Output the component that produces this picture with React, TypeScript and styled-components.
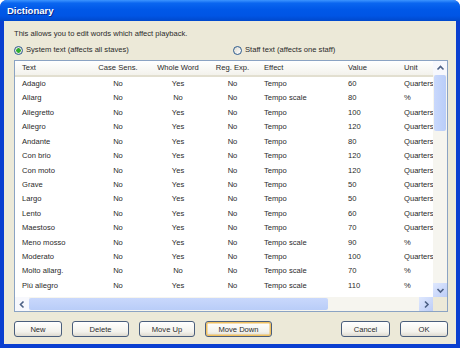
import React from "react";
import styled, { createGlobalStyle } from "styled-components";

const GlobalStyle = createGlobalStyle`
  html, body {
    margin: 0;
    padding: 0;
    background: #ffffff;
  }
  body {
    font-family: "Liberation Sans", Arial, sans-serif;
    color: #2a2a2a;
  }
`;

type Align = "left" | "center";

const columns: { label: string; width: number; align: Align; pad: number }[] = [
  { label: "Text", width: 80, align: "left", pad: 7 },
  { label: "Case Sens.", width: 46, align: "center", pad: 0 },
  { label: "Whole Word", width: 74, align: "center", pad: 0 },
  { label: "Reg. Exp.", width: 35, align: "center", pad: 0 },
  { label: "Effect", width: 91, align: "left", pad: 14 },
  { label: "Value", width: 57, align: "left", pad: 7 },
  { label: "Unit", width: 60, align: "left", pad: 6 },
];

const rows: string[][] = [
  ["Adagio", "No", "Yes", "No", "Tempo", "60", "Quarters"],
  ["Allarg", "No", "No", "No", "Tempo scale", "80", "%"],
  ["Allegretto", "No", "Yes", "No", "Tempo", "100", "Quarters"],
  ["Allegro", "No", "Yes", "No", "Tempo", "120", "Quarters"],
  ["Andante", "No", "Yes", "No", "Tempo", "80", "Quarters"],
  ["Con brio", "No", "Yes", "No", "Tempo", "120", "Quarters"],
  ["Con moto", "No", "Yes", "No", "Tempo", "120", "Quarters"],
  ["Grave", "No", "Yes", "No", "Tempo", "50", "Quarters"],
  ["Largo", "No", "Yes", "No", "Tempo", "50", "Quarters"],
  ["Lento", "No", "Yes", "No", "Tempo", "60", "Quarters"],
  ["Maestoso", "No", "Yes", "No", "Tempo", "70", "Quarters"],
  ["Meno mosso", "No", "Yes", "No", "Tempo scale", "90", "%"],
  ["Moderato", "No", "Yes", "No", "Tempo", "100", "Quarters"],
  ["Molto allarg.", "No", "No", "No", "Tempo scale", "70", "%"],
  ["Più allegro", "No", "Yes", "No", "Tempo scale", "110", "%"],
];

const gridTemplate = columns.map((c) => `${c.width}px`).join(" ");

const Arrow = ({ dir }: { dir: "up" | "down" | "left" | "right" }) => {
  const paths = {
    up: "M1.5 5.5 L4.5 2.5 L7.5 5.5",
    down: "M1.5 3 L4.5 6 L7.5 3",
    left: "M5.5 1.5 L2.5 4.5 L5.5 7.5",
    right: "M3 1.5 L6 4.5 L3 7.5",
  };
  return (
    <svg width="9" height="9" viewBox="0 0 9 9">
      <path d={paths[dir]} fill="none" stroke="#4d6185" strokeWidth="1.6" />
    </svg>
  );
};

const App = () => {
  return (
    <>
      <GlobalStyle />
      <Window>
        <TitleBar>Dictionary</TitleBar>
        <Body>
          <Description>This allows you to edit words which affect playback.</Description>
          <RadioRow>
            <RadioOption $width={219}>
              <RadioCircle $checked />
              System text (affects all staves)
            </RadioOption>
            <RadioOption>
              <RadioCircle />
              Staff text (affects one staff)
            </RadioOption>
          </RadioRow>
          <ListBox>
            <TableArea>
              <HeaderRow>
                {columns.map((c) => (
                  <HeaderCell key={c.label} $align={c.align} $pad={c.pad}>
                    {c.label}
                  </HeaderCell>
                ))}
              </HeaderRow>
              {rows.map((r) => (
                <DataRow key={r[0]}>
                  {r.map((v, i) => (
                    <Cell key={i} $align={columns[i].align} $pad={columns[i].pad}>
                      {v}
                    </Cell>
                  ))}
                </DataRow>
              ))}
            </TableArea>
            <VScroll>
              <ScrollButton $plain>
                <Arrow dir="up" />
              </ScrollButton>
              <VThumb />
              <Track />
              <ScrollButton>
                <Arrow dir="down" />
              </ScrollButton>
            </VScroll>
            <HScroll>
              <ScrollButton $plain>
                <Arrow dir="left" />
              </ScrollButton>
              <HThumb />
              <Track />
              <ScrollButton>
                <Arrow dir="right" />
              </ScrollButton>
            </HScroll>
            <Corner />
          </ListBox>
          <ButtonRow>
            <Button $width={48}>New</Button>
            <Button $width={57}>Delete</Button>
            <Button $width={56}>Move Up</Button>
            <Button $width={67} $focused>
              Move Down
            </Button>
            <Spacer />
            <Button $width={49}>Cancel</Button>
            <Button $width={48}>OK</Button>
          </ButtonRow>
        </Body>
      </Window>
    </>
  );
};

export default App;

const Window = styled.div`
  width: 460px;
  height: 348px;
  display: flex;
  flex-direction: column;
  background: #0a3fd0;
  border-radius: 7px 7px 0 0;
  overflow: hidden;
`;

const TitleBar = styled.div`
  height: 21px;
  flex: none;
  display: flex;
  align-items: center;
  padding-left: 7px;
  font-size: 9.5px;
  font-weight: bold;
  color: #ffffff;
  text-shadow: 1px 1px 0 #0a2a8a;
  background: linear-gradient(
    to bottom,
    #3d95ff 0%,
    #0a66f0 15%,
    #0058e8 45%,
    #0055e5 75%,
    #0048cc 100%
  );
`;

const Body = styled.div`
  flex: 1;
  margin: 0 4px 4px 4px;
  background: #ece9d8;
  padding: 8px 8px 7px 10px;
  display: flex;
  flex-direction: column;
  font-size: 7.6px;
`;

const Description = styled.div`
  height: 10px;
  line-height: 10px;
`;

const RadioRow = styled.div`
  display: flex;
  align-items: center;
  height: 10px;
  margin-top: 6px;
  line-height: 10px;
`;

const RadioOption = styled.div<{ $width?: number }>`
  display: flex;
  align-items: center;
  gap: 3px;
  width: ${(p) => (p.$width ? `${p.$width}px` : "auto")};
`;

const RadioCircle = styled.span<{ $checked?: boolean }>`
  width: 7px;
  height: 7px;
  border-radius: 50%;
  border: 1px solid #2c5b8e;
  background: ${(p) =>
    p.$checked
      ? "radial-gradient(circle, #2fae2f 0 2px, #e6e5dc 2.5px)"
      : "linear-gradient(135deg, #dcdad0, #ffffff)"};
  flex: none;
`;

const ListBox = styled.div`
  margin-top: 5px;
  height: 252px;
  width: 434px;
  box-sizing: border-box;
  border: 1px solid #8ba3c3;
  background: #ffffff;
  display: grid;
  grid-template-columns: 1fr 14px;
  grid-template-rows: 1fr 14px;
`;

const TableArea = styled.div`
  overflow: hidden;
  grid-column: 1;
  grid-row: 1;
`;

const HeaderRow = styled.div`
  display: grid;
  grid-template-columns: ${gridTemplate};
  height: 16px;
  box-sizing: border-box;
  background: linear-gradient(to bottom, #ffffff, #f3f2ec);
  border-bottom: 2px solid #e2dfd0;
`;

const HeaderCell = styled.div<{ $align: Align; $pad: number }>`
  line-height: 14px;
  text-align: ${(p) => p.$align};
  padding-left: ${(p) => p.$pad}px;
  white-space: nowrap;
`;

const DataRow = styled.div`
  display: grid;
  grid-template-columns: ${gridTemplate};
  height: 14.43px;
`;

const Cell = styled.div<{ $align: Align; $pad: number }>`
  line-height: 14.43px;
  text-align: ${(p) => p.$align};
  padding-left: ${(p) => p.$pad}px;
  white-space: nowrap;
  overflow: hidden;
`;

const VScroll = styled.div`
  grid-column: 2;
  grid-row: 1;
  display: flex;
  flex-direction: column;
  background: #f6f5ef;
`;

const HScroll = styled.div`
  grid-column: 1;
  grid-row: 2;
  display: flex;
  background: #f6f5ef;
`;

const Corner = styled.div`
  grid-column: 2;
  grid-row: 2;
  background: #ece9d8;
`;

const ScrollButton = styled.div<{ $plain?: boolean }>`
  width: 14px;
  height: 14px;
  flex: none;
  display: flex;
  align-items: center;
  justify-content: center;
  box-sizing: border-box;
  background: ${(p) =>
    p.$plain ? "#f7f8fd" : "linear-gradient(135deg, #dfe8fe, #bccdf7)"};
`;

const VThumb = styled.div`
  height: 56px;
  flex: none;
  margin: 0 1px;
  border-radius: 2px;
  background: linear-gradient(to right, #c9d8fc, #b9cdf8);
`;

const HThumb = styled.div`
  width: 299px;
  flex: none;
  margin: 1px 0;
  border-radius: 2px;
  background: linear-gradient(to bottom, #c9d8fc, #b9cdf8);
`;

const Track = styled.div`
  flex: 1;
`;

const ButtonRow = styled.div`
  margin-top: 9px;
  height: 16px;
  width: 434px;
  display: flex;
  gap: 10px;
`;

const Spacer = styled.div`
  flex: 1;
`;

const Button = styled.div<{ $width: number; $focused?: boolean }>`
  width: ${(p) => p.$width}px;
  height: 16px;
  box-sizing: border-box;
  flex: none;
  display: flex;
  align-items: center;
  justify-content: center;
  border: 1px solid #4a5e7c;
  border-radius: 3px;
  background: linear-gradient(to bottom, #ffffff 0%, #f3f2ec 70%, #dedad0 100%);
  box-shadow: ${(p) => (p.$focused ? "inset 0 0 0 1.5px #f0c060" : "none")};
  font-size: 7.6px;
`;
